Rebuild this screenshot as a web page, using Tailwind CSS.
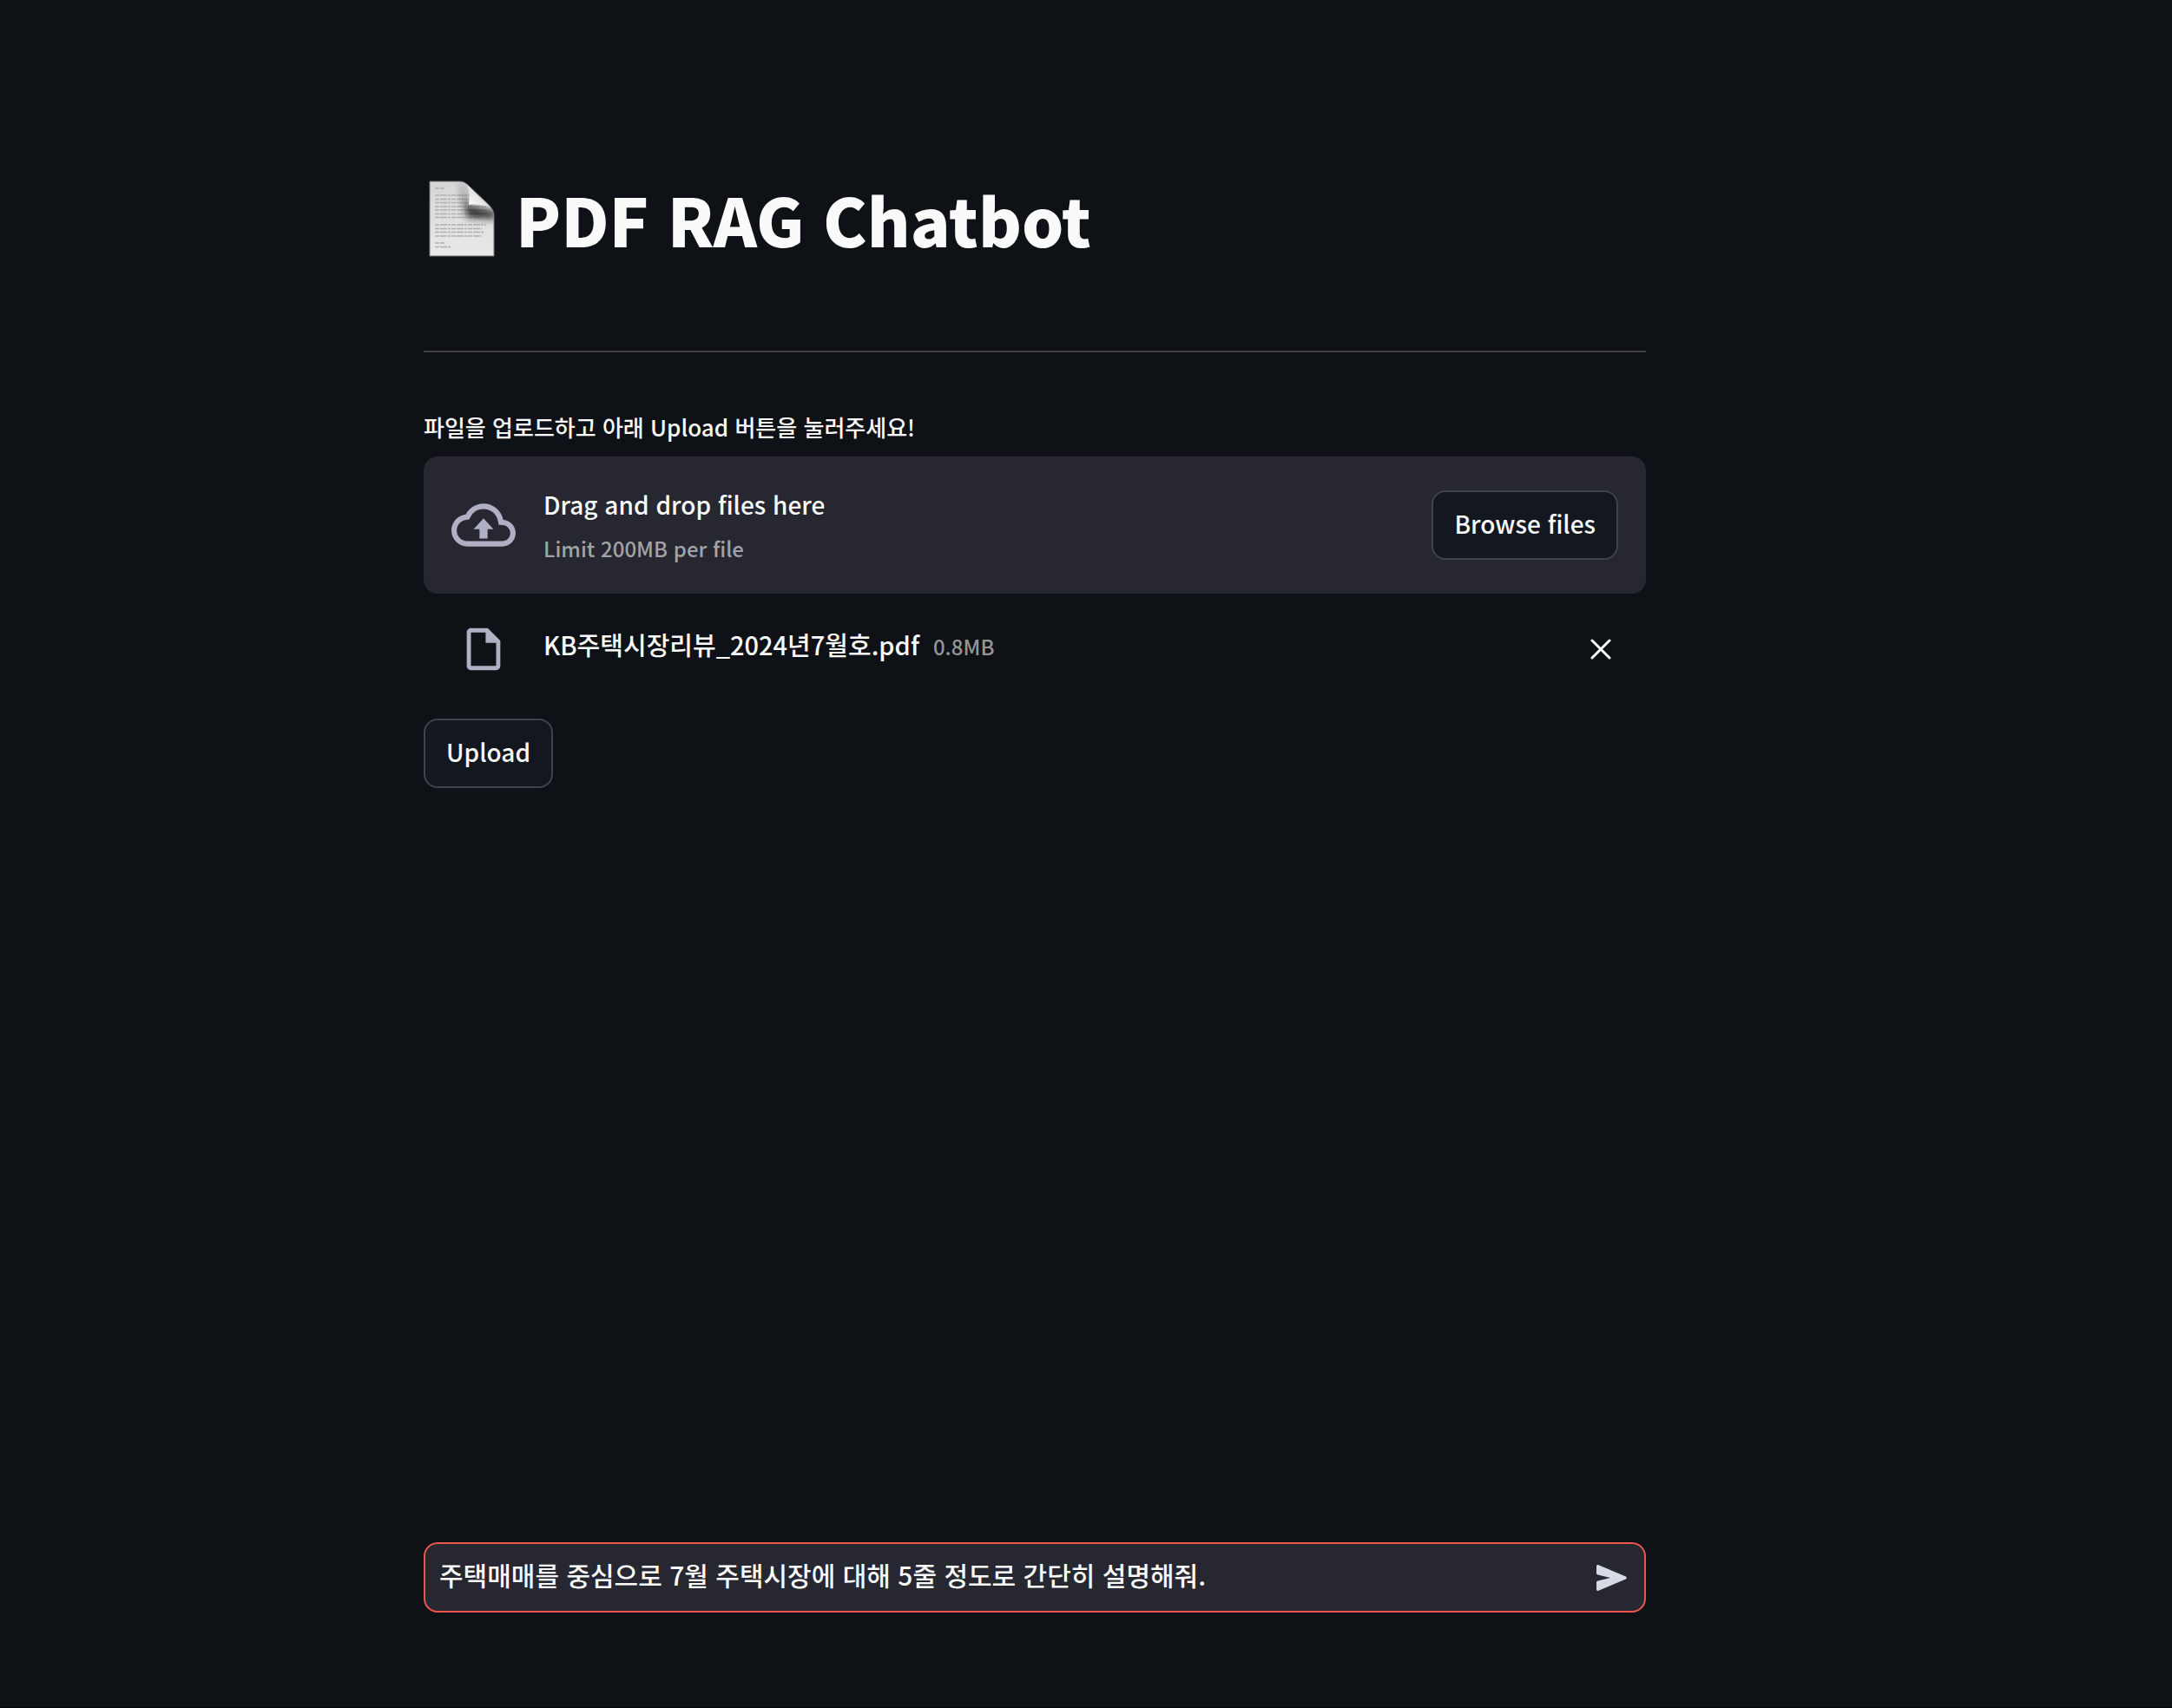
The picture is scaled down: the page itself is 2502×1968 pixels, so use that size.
<!DOCTYPE html>
<html lang="ko">
<head>
<meta charset="utf-8">
<meta name="viewport" content="width=device-width, initial-scale=1">
<title>PDF RAG Chatbot</title>
<script src="https://cdn.jsdelivr.net/npm/@tailwindcss/browser@4"></script>
</head>
<body class="bg-[#0e1116] font-['Noto_Sans_CJK_KR',sans-serif] font-medium text-[#fafafa]">
<div class="flex min-h-screen flex-col border-b border-[#07080b] pr-[118px]">
  <main class="mx-auto w-full max-w-[1408px] grow pt-[188px]">
    <h1 class="flex items-center text-[76px] leading-[128px] font-black">
      <svg class="mr-[24px] ml-[6px] h-[88px] w-[76px] shrink-0" viewBox="0 0 76 88" role="img" aria-label="문서">
        <defs>
          <linearGradient id="paper" x1="0" y1="0" x2="0" y2="1"><stop offset="0" stop-color="#d6d6d6"/><stop offset="1" stop-color="#e9e9e9"/></linearGradient>
          <linearGradient id="curl" x1="0" y1="1" x2="1" y2="0"><stop offset="0" stop-color="#ffffff"/><stop offset="1" stop-color="#c4c4c4"/></linearGradient>
          <clipPath id="sheet"><path d="M1 1H35C40 1 43 3 46 6L69 28C73 32 75 36 75 41V87H1Z"/></clipPath>
          <filter id="soft" x="-50%" y="-50%" width="200%" height="200%"><feGaussianBlur stdDeviation="4"/></filter>
        </defs>
        <g clip-path="url(#sheet)">
          <rect width="76" height="88" fill="url(#paper)"/>
          <g stroke="#b0b0b0" stroke-width="1.4" stroke-dasharray="5 1 8 1 3 1">
            <path d="M7 9H18M7 17H46M7 21.500H46M7 25.500H47M7 30H66M7 34H66M7 38.500H66M7 42.500H61M7 51H66M7 55.500H61M7 59.500H64M7 64H61M7 72H18M7 76.500H26"/>
          </g>
          <path d="M36 -2L46 30L78 36L76 44L44 42Z" fill="#222" filter="url(#soft)"/>
        </g>
        <path d="M45 6C47 12 47 21 46 28C54 27 62 28 69 30Z" fill="url(#curl)"/>
        <path d="M1 1H35C40 1 43 3 46 6L69 28C73 32 75 36 75 41V87H1Z" fill="none" stroke="#777" stroke-width="1"/>
      </svg>
      <span>PDF RAG Chatbot</span>
    </h1>
    <hr class="mt-[88px] border-0 border-t-2 border-[#3e4046]">

    <section class="pt-[62px]">
      <label for="files" class="block text-[26px] leading-[48px]">파일을 업로드하고 아래 Upload 버튼을 눌러주세요!</label>
      <div class="mt-[10px] flex h-[158px] items-center gap-[32px] rounded-[16px] bg-[#262730] px-[32px]">
        <svg class="size-[74px] shrink-0 fill-[#afb0c4]" viewBox="0 0 24 24" aria-hidden="true"><path d="M19.350 10.040A7.490 7.490 0 0 0 12 4C9.110 4 6.600 5.640 5.350 8.040A5.994 5.994 0 0 0 0 14c0 3.310 2.690 6 6 6h13c2.760 0 5-2.240 5-5 0-2.640-2.050-4.780-4.650-4.960zM19 18H6c-2.210 0-4-1.790-4-4 0-2.050 1.530-3.760 3.560-3.970l1.070-.110.500-.950A5.469 5.469 0 0 1 12 6c2.620 0 4.880 1.860 5.390 4.430l.300 1.500 1.530.110A2.980 2.980 0 0 1 22 15c0 1.650-1.350 3-3 3zM8.300 13.500H10.500V17H13.500V13.500H15.700L12 9.500z"/></svg>
        <div class="grow pt-[2px]">
          <p class="text-[28px] leading-[48px]">Drag and drop files here</p>
          <p class="pt-[4px] text-[24px] leading-[46px] text-[#a3a3a7]">Limit 200MB per file</p>
        </div>
        <input id="files" type="file" multiple class="sr-only">
        <button type="button" class="h-[80px] rounded-[16px] border-2 border-[#41434b] bg-[#131720] px-[24px] pb-[4px] text-[28px]">Browse files</button>
      </div>
      <ul>
        <li class="flex h-[128px] items-center pr-[36px] pl-[32px]">
          <span class="mr-[32px] flex w-[74px] shrink-0 justify-center">
            <svg class="size-[58px] fill-[#afb0c4]" viewBox="0 0 24 24" aria-hidden="true"><path d="M14 2H6c-1.100 0-2 .900-2 2v16c0 1.100.900 2 2 2h12c1.100 0 2-.900 2-2V8l-6-6zM6 20V4h7v5h5v11H6z"/></svg>
          </span>
          <span class="flex grow items-baseline gap-[16px] pb-[10px]">
            <span class="text-[29px]">KB주택시장리뷰_2024년7월호.pdf</span>
            <span class="text-[24px] text-[#949598]">0.8MB</span>
          </span>
          <button type="button" aria-label="삭제" class="flex size-[32px] items-center justify-center">
            <svg class="size-[24px]" viewBox="0 0 24 24" fill="none" stroke="#fafafa" stroke-width="3" stroke-linecap="round" aria-hidden="true"><path d="M2 2L22 22M22 2L2 22"/></svg>
          </button>
        </li>
      </ul>
      <button type="button" class="mt-[16px] h-[80px] rounded-[16px] border-2 border-[#41434b] bg-[#131720] px-[24px] pb-[4px] text-[28px]">Upload</button>
    </section>
  </main>

  <footer class="mx-auto w-full max-w-[1408px] pb-[109px]">
    <form class="flex h-[81px] items-center rounded-[16px] border-2 border-[#f0564f] bg-[#262730] pr-[14px] pl-[16px]">
      <input type="text" aria-label="질문" value="주택매매를 중심으로 7월 주택시장에 대해 5줄 정도로 간단히 설명해줘." class="min-w-0 grow bg-transparent pb-[8px] text-[30px] leading-[48px] outline-none">
      <button type="button" aria-label="보내기" class="flex size-[48px] items-center justify-center">
        <svg class="h-[30px] w-[35px] fill-[#d5dae5]" viewBox="0 0 35 30" aria-hidden="true"><path d="M0 1.800C0 .400 1.200-.300 2.500.200L33.800 13.500C35.200 14.200 35.200 15.800 33.800 16.500L2.500 29.800C1.200 30.300 0 29.600 0 28.200V20.500C0 19.500.600 18.900 1.500 18.600L16 15L1.500 11.400C.600 11.100 0 10.500 0 9.500Z"/></svg>
      </button>
    </form>
  </footer>
</div>
</body>
</html>
